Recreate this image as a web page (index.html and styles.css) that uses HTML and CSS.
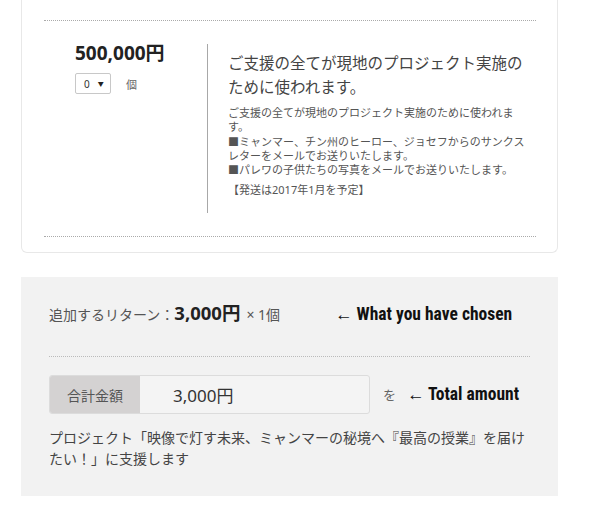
FILE: index.html
```html
<!DOCTYPE html>
<html lang="ja">
<head>
<meta charset="utf-8">
<link rel="stylesheet" href="styles.css">
</head>
<body>
<div class="card">
  <div class="item">
    <div class="item-left">
      <div class="price">500,000円</div>
      <div class="qty">
        <div class="select"><span class="sel-val">0</span><span class="sel-arrow">▼</span></div>
        <span class="unit">個</span>
      </div>
    </div>
    <div class="item-right">
      <h3 class="title">ご支援の全てが現地のプロジェクト実施のために使われます。</h3>
      <p class="detail">ご支援の全てが現地のプロジェクト実施のために使われます。<br>■ミャンマー、チン州のヒーロー、ジョセフからのサンクスレターをメールでお送りいたします。<br>■パレワの子供たちの写真をメールでお送りいたします。</p>
      <p class="ship">【発送は2017年1月を予定】</p>
    </div>
  </div>
</div>

<div class="summary">
  <div class="added">
    <span class="added-label">追加するリターン：</span><span class="added-price">3,000円</span><span class="added-times">× 1個</span>
    <span class="note note-chosen">← What you have chosen</span>
  </div>
  <div class="total-row">
    <div class="total-box">
      <div class="total-label">合計金額</div>
      <div class="total-value">3,000円</div>
    </div>
    <span class="wo">を</span>
    <span class="note note-total">← Total amount</span>
  </div>
  <p class="support">プロジェクト「映像で灯す未来、ミャンマーの秘境へ『最高の授業』を届けたい！」に支援します</p>
</div>
</body>
</html>
```

FILE: styles.css
```css
* { box-sizing: border-box; }

body {
  margin: 0;
  background: #ffffff;
  font-family: "Noto Sans", "Noto Sans CJK JP", sans-serif;
  color: #444;
}

.card {
  margin-left: 21px;
  width: 537px;
  background: #fff;
  border: 1px solid #e8e8e8;
  border-top: none;
  border-radius: 0 0 6px 6px;
  padding: 20px 21px 15px 22px;
}

.item {
  display: flex;
  border-top: 1px dotted #aaa;
  border-bottom: 1px dotted #aaa;
  padding: 23px 0 23px 0;
}

.item-left {
  width: 163px;
  padding-left: 31px;
}

.price {
  font-size: 19px;
  font-weight: 700;
  color: #222;
  line-height: 22px;
  margin-top: -2px;
}

.qty {
  display: flex;
  align-items: center;
  margin-top: 9px;
}

.select {
  width: 36px;
  height: 21px;
  border: 1px solid #c8c8c8;
  border-radius: 2px;
  background: #fff;
  display: flex;
  align-items: center;
  padding-left: 8px;
  gap: 8px;
  font-size: 10px;
  color: #333;
}

.sel-arrow {
  font-size: 6px;
  color: #222;
}

.unit {
  margin-left: 15px;
  font-size: 11px;
  color: #666;
}

.item-right {
  border-left: 1px solid #a8a8a8;
  padding: 7px 0 16px 20px;
  width: 321px;
}

.title {
  margin: 0;
  font-size: 15.5px;
  font-weight: 400;
  line-height: 24px;
  color: #444;
}

.detail {
  margin: 7px 0 0;
  font-size: 11px;
  line-height: 14.25px;
  color: #555;
}

.ship {
  margin: 6px 0 0;
  font-size: 11px;
  line-height: 14px;
  color: #555;
}

.summary {
  margin: 24px 0 0 21px;
  width: 537px;
  background: #f2f2f2;
  padding: 24px 28px 27px 28px;
}

.added {
  display: flex;
  align-items: baseline;
  height: 24px;
  line-height: 24px;
  margin-bottom: 31px;
}

.added-label {
  font-size: 14px;
  color: #555;
}

.added-price {
  font-size: 18.5px;
  font-weight: 700;
  color: #222;
}

.added-times {
  margin-left: 6px;
  font-size: 14px;
  color: #555;
}

.note {
  font-family: "Liberation Sans Narrow", "Roboto Condensed", "Arial Narrow", Roboto, sans-serif;
  font-weight: 700;
  font-size: 17.5px;
  color: #111;
}

.note-chosen {
  margin-left: 55px;
}

.total-row {
  display: flex;
  align-items: center;
  border-top: 1px dotted #bbb;
  padding-top: 18px;
}

.total-box {
  display: flex;
  width: 321px;
  height: 39px;
  border: 1px solid #dcdcdc;
  border-radius: 3px;
  overflow: hidden;
  background: #f4f4f4;
}

.total-label {
  width: 90px;
  background: #d4d2d2;
  display: flex;
  align-items: center;
  justify-content: center;
  font-size: 14px;
  color: #555;
}

.total-value {
  padding-left: 33px;
  display: flex;
  align-items: center;
  font-size: 17px;
  color: #333;
}

.wo {
  margin-left: 13px;
  font-size: 13px;
  color: #666;
}

.note-total {
  margin-left: 11px;
}

.support {
  margin: 13px 0 0;
  font-size: 14px;
  line-height: 21px;
  color: #444;
}
```
